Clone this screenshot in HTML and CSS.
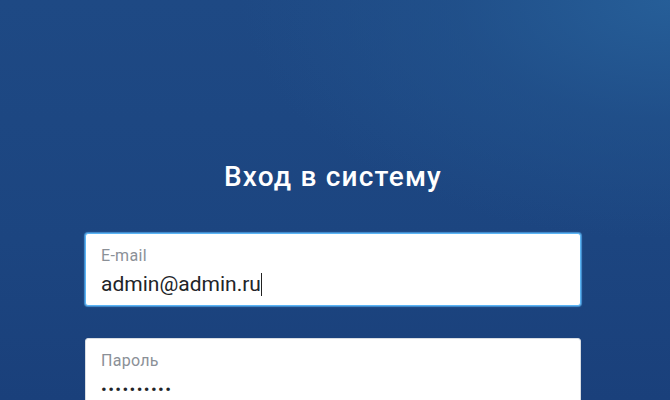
FILE: index.html
```html
<!DOCTYPE html>
<html lang="ru">
<head>
<meta charset="utf-8">
<title>Вход в систему</title>
<link rel="stylesheet" href="styles.css">
</head>
<body>
<main class="page">
  <section class="login">
    <h1 class="title">Вход в систему</h1>
    <div class="field field--focus">
      <span class="field-label">E-mail</span>
      <span class="field-value">admin@admin.ru<span class="caret"></span></span>
    </div>
    <div class="field">
      <span class="field-label">Пароль</span>
      <span class="field-value field-value--dots">••••••••••</span>
    </div>
  </section>
</main>
</body>
</html>
```
FILE: styles.css
```css
html, body {
  margin: 0;
  height: 100%;
}
body {
  font-family: Roboto, "Noto Sans", sans-serif;
  background:
    radial-gradient(ellipse 80% 75% at 100% 0%, rgba(38, 94, 152, 1) 0%, rgba(34, 84, 142, 0.6) 40%, rgba(30, 72, 130, 0) 80%),
    linear-gradient(180deg, #1e4984 0%, #1c4580 60%, #1a407b 100%);
  overflow: hidden;
}
.page {
  display: flex;
  justify-content: center;
  padding: 160px 4px 0 0;
}
.login {
  width: 496px;
  display: flex;
  flex-direction: column;
}
.title {
  margin: 0 0 39px;
  text-align: center;
  color: #ffffff;
  font-weight: 500;
  font-size: 28px;
  line-height: 34px;
  letter-spacing: 1.2px;
}
.field {
  box-sizing: border-box;
  height: 73px;
  background: #ffffff;
  border: 1px solid #d8dde3;
  border-radius: 3px;
  padding: 12px 15px 0;
  display: flex;
  flex-direction: column;
  margin-bottom: 32px;
}
.field--focus {
  border-color: #5ab4f5;
  box-shadow: 0 0 0 1px rgba(90, 180, 245, 0.55), 0 0 3px rgba(90, 180, 245, 0.5);
}
.field-label {
  color: #8b9097;
  font-size: 16px;
  line-height: 20px;
  letter-spacing: 0.3px;
}
.field-value {
  color: #222428;
  font-size: 21px;
  line-height: 30px;
  margin-top: 3px;
  display: flex;
  align-items: center;
}
.caret {
  display: inline-block;
  width: 1px;
  height: 23px;
  background: #222;
  margin-left: 0;
}
.field-value--dots {
  letter-spacing: 1.4px;
  font-size: 17px;
}
```
